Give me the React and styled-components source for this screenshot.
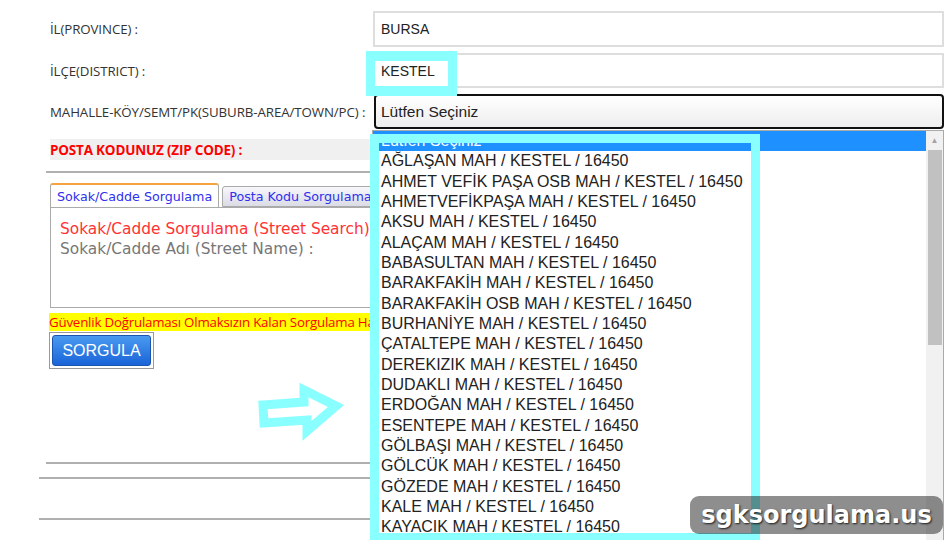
import React from 'react';
import styled, { createGlobalStyle } from 'styled-components';

const GlobalStyle = createGlobalStyle`
  html, body { margin: 0; padding: 0; background: #fff; }
  body { width: 945px; height: 540px; overflow: hidden; }
`;

const items = [
  'AĞLAŞAN MAH / KESTEL / 16450',
  'AHMET VEFİK PAŞA OSB MAH / KESTEL / 16450',
  'AHMETVEFİKPAŞA MAH / KESTEL / 16450',
  'AKSU MAH / KESTEL / 16450',
  'ALAÇAM MAH / KESTEL / 16450',
  'BABASULTAN MAH / KESTEL / 16450',
  'BARAKFAKİH MAH / KESTEL / 16450',
  'BARAKFAKİH OSB MAH / KESTEL / 16450',
  'BURHANİYE MAH / KESTEL / 16450',
  'ÇATALTEPE MAH / KESTEL / 16450',
  'DEREKIZIK MAH / KESTEL / 16450',
  'DUDAKLI MAH / KESTEL / 16450',
  'ERDOĞAN MAH / KESTEL / 16450',
  'ESENTEPE MAH / KESTEL / 16450',
  'GÖLBAŞI MAH / KESTEL / 16450',
  'GÖLCÜK MAH / KESTEL / 16450',
  'GÖZEDE MAH / KESTEL / 16450',
  'KALE MAH / KESTEL / 16450',
  'KAYACIK MAH / KESTEL / 16450',
];

const Page = styled.div`
  position: relative;
  width: 945px;
  height: 540px;
  overflow: hidden;
  padding: 11px 0 0 50px;
  box-sizing: border-box;
  font-family: "Open Sans", "Noto Sans", sans-serif;
`;

const Row = styled.div`
  display: grid;
  grid-template-columns: 323px 571px;
  align-items: center;
  height: ${p => p.h || 35}px;
  margin-bottom: 6px;
`;

const Label = styled.div`
  font-size: 13.3px;
  color: #333;
  white-space: nowrap;
  letter-spacing: -0.1px;
`;

const Input = styled.div`
  height: 100%;
  box-sizing: border-box;
  border: 2px solid #dedede;
  display: flex;
  align-items: center;
  padding-left: 6px;
  font-family: "Liberation Sans", Arial, sans-serif;
  font-size: 14px;
  color: #222;
`;

const Select = styled.div`
  height: 100%;
  margin-left: 1px;
  box-sizing: border-box;
  border: 2px solid #111;
  border-radius: 4px;
  background: linear-gradient(#fff, #eee);
  display: flex;
  align-items: center;
  padding-left: 5px;
  font-family: "Liberation Sans", Arial, sans-serif;
  font-size: 15.5px;
  color: #222;
`;

const Left = styled.div`
  width: 322px;
  margin-top: 10px;
`;

const ZipBand = styled.div`
  height: 21px;
  background: #f0f0f0;
  display: flex;
  align-items: center;
  font-size: 13.5px;
  font-weight: 700;
  color: #f00;
  letter-spacing: -0.2px;
  white-space: nowrap;
`;

const Rule = styled.div`
  height: 2px;
  background: #b0b0b0;
  margin: ${p => p.m || '0'};
`;

const Tabs = styled.div`
  display: flex;
  align-items: flex-end;
  gap: 3px;
  height: 24px;
  margin-top: 10px;
  overflow: hidden;
`;

const Tab = styled.div`
  height: ${p => (p.active ? 24 : 21)}px;
  box-sizing: border-box;
  padding: 0 6px;
  display: flex;
  align-items: center;
  border: 1px solid #aaa;
  border-bottom: ${p => (p.active ? 'none' : '1px solid #aaa')};
  border-top: ${p => (p.active ? '2px solid #f5a340' : '1px solid #aaa')};
  border-radius: 3px 3px 0 0;
  background: ${p => (p.active ? '#fff' : 'linear-gradient(#f6f6fb, #dcdce6)')};
  font-family: "DejaVu Sans", Verdana, sans-serif;
  font-size: 12.7px;
  color: #3030f0;
  white-space: nowrap;
  flex: none;
`;

const Panel = styled.div`
  height: 101px;
  box-sizing: border-box;
  border: 1px solid #aaa;
  padding: 11px 0 0 9px;
  font-family: "DejaVu Sans", Verdana, sans-serif;
  font-size: 15.4px;
  line-height: 20px;
  white-space: nowrap;
  overflow: hidden;
`;

const PanelLine = styled.div`
  color: ${p => p.c};
`;

const Warn = styled.div`
  margin-top: 5px;
  margin-left: -1px;
  width: 360px;
  height: 18px;
  background: #ffff00;
  color: #f00;
  font-size: 13.3px;
  line-height: 18px;
  white-space: nowrap;
  letter-spacing: -0.2px;
`;

const BtnFrame = styled.div`
  margin-top: 1px;
  margin-left: -1px;
  width: 105px;
  height: 37px;
  box-sizing: border-box;
  border: 1px solid #999;
  padding: 2px;
`;

const Button = styled.div`
  height: 100%;
  border-radius: 3px;
  background: linear-gradient(#4a9af0, #1a64d8);
  border: 1px solid #1a55b0;
  box-sizing: border-box;
  display: flex;
  align-items: center;
  justify-content: center;
  color: #fff;
  font-family: "Liberation Sans", Arial, sans-serif;
  font-size: 16px;
`;

const Spacer = styled.div`
  height: ${p => p.h}px;
`;

const ListBox = styled.div`
  position: absolute;
  left: 372px;
  top: 130px;
  width: 572px;
  height: 430px;
  box-sizing: border-box;
  border: 1px solid #aaa;
  background: #fff;
  display: flex;
`;

const Options = styled.div`
  flex: 1;
  overflow: hidden;
  font-family: "Liberation Sans", Arial, sans-serif;
  font-size: 16px;
  color: #222;
`;

const Option = styled.div`
  height: 20.33px;
  line-height: 20.33px;
  padding-left: 8px;
  white-space: nowrap;
  background: ${p => (p.sel ? '#1e90ff' : 'transparent')};
  color: ${p => (p.sel ? '#fff' : '#222')};
`;

const Scroll = styled.div`
  width: 17px;
  background: #f1f1f1;
  display: flex;
  flex-direction: column;
  align-items: center;
`;

const ArrowBtn = styled.div`
  height: 17px;
  display: flex;
  align-items: center;
  justify-content: center;
  color: #a3a3a3;
  font-size: 8px;
`;

const Thumb = styled.div`
  width: 14px;
  height: 195px;
  margin-top: 2px;
  background: #c1c1c1;
`;

const Highlight = styled.div`
  position: absolute;
  box-sizing: border-box;
  border: solid #8affff;
  border-width: ${p => p.bw};
`;

const Arrow = styled.svg`
  position: absolute;
  left: 250px;
  top: 378px;
`;

const Watermark = styled.div`
  position: absolute;
  left: 690px;
  top: 496px;
  width: 253px;
  height: 38px;
  border-radius: 9px;
  background: rgba(30, 30, 30, 0.5);
  display: flex;
  align-items: center;
  justify-content: center;
  font-family: "DejaVu Sans", Verdana, sans-serif;
  font-weight: 700;
  font-size: 24px;
  color: #fff;
  text-shadow: 1px 1px 2px rgba(0, 0, 0, 0.8);
`;

export default function App() {
  return (
    <>
      <GlobalStyle />
      <Page>
        <Row h={36}>
          <Label>İL(PROVINCE) :</Label>
          <Input>BURSA</Input>
        </Row>
        <Row>
          <Label>İLÇE(DISTRICT) :</Label>
          <Input>KESTEL</Input>
        </Row>
        <Row>
          <Label>MAHALLE-KÖY/SEMT/PK(SUBURB-AREA/TOWN/PC) :</Label>
          <Select>Lütfen Seçiniz</Select>
        </Row>
        <Left>
          <ZipBand>POSTA KODUNUZ (ZIP CODE) :</ZipBand>
          <Rule m="11px 0 0 -4px" />
          <Tabs>
            <Tab active>Sokak/Cadde Sorgulama</Tab>
            <Tab>Posta Kodu Sorgulama</Tab>
          </Tabs>
          <Panel>
            <PanelLine c="#f33">Sokak/Cadde Sorgulama (Street Search)</PanelLine>
            <PanelLine c="#777">Sokak/Cadde Adı (Street Name) :</PanelLine>
          </Panel>
          <Warn>Güvenlik Doğrulaması Olmaksızın Kalan Sorgulama Hakkı</Warn>
          <BtnFrame>
            <Button>SORGULA</Button>
          </BtnFrame>
          <Spacer h={93} />
          <Rule m="0 0 0 -4px" />
          <Rule m="13px 0 0 -11px" />
          <Rule m="39px 0 0 -11px" />
        </Left>

        <ListBox>
          <Options>
            <Option sel>Lütfen Seçiniz</Option>
            {items.map(t => (
              <Option key={t}>{t}</Option>
            ))}
          </Options>
          <Scroll>
            <ArrowBtn>▲</ArrowBtn>
            <Thumb />
          </Scroll>
        </ListBox>

        <Highlight bw="10px 9px" style={{ left: 366, top: 51, width: 91, height: 45 }} />
        <Highlight bw="9px 9px 7px 9px" style={{ left: 370, top: 134, width: 390, height: 406 }} />

        <Arrow width="100" height="70" viewBox="250 378 100 70">
          <polygon
            points="263,405 304,402 304,390 336,406 307,431 307,420 264,423"
            fill="none"
            stroke="#8affff"
            strokeWidth="9"
            strokeLinejoin="miter"
          />
        </Arrow>

        <Watermark>sgksorgulama.us</Watermark>
      </Page>
    </>
  );
}
